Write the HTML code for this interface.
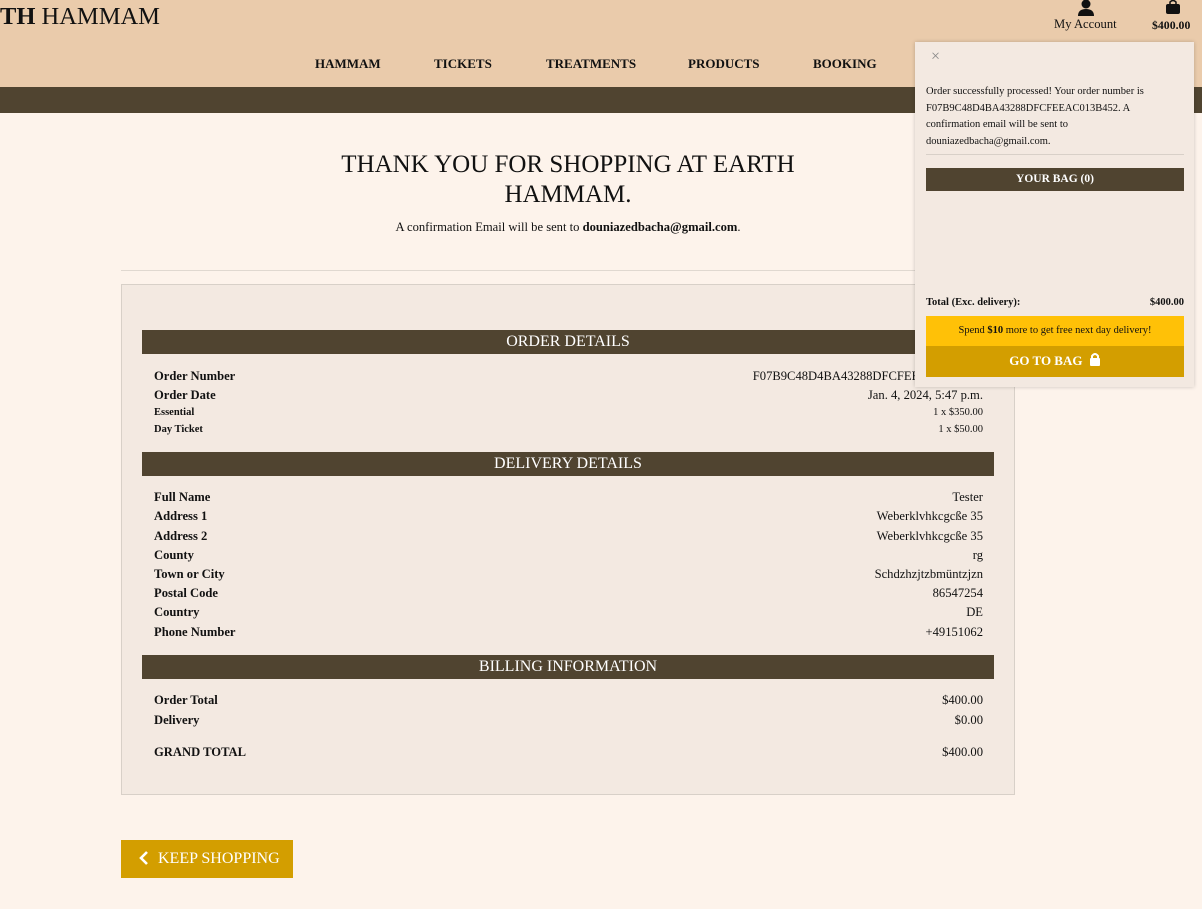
<!DOCTYPE html>
<html><head><meta charset="utf-8"><style>
*{margin:0;padding:0;box-sizing:border-box}
body{width:1202px;height:909px;background:#fdf3eb;font-family:"Liberation Serif",serif;color:#111;position:relative;overflow:hidden}
.a{position:absolute}
.hdr{left:0;top:0;width:1202px;height:87px;background:#eacbab}
.band{left:0;top:87px;width:1202px;height:26px;background:#504430}
.nav{top:56px;font-size:13px;font-weight:bold;letter-spacing:0}
.card{left:121px;top:284px;width:894px;height:511px;background:#f3e9e1;border:1px solid #d8d0c8}
.sh{left:142px;width:852px;height:24px;background:#504430;color:#fff;text-align:center;font-size:16px;line-height:24px}
.r{left:154px;width:829px;font-size:12.6px;display:flex;justify-content:space-between;height:16px;line-height:16px}
.s{font-size:10.5px}
</style></head><body>
<div class="a hdr"></div>
<div class="a band"></div>
<div class="a" style="left:0;top:2px;font-size:24.5px;line-height:30px"><b>TH</b> HAMMAM</div>
<div class="a nav" style="left:315px">HAMMAM</div>
<div class="a nav" style="left:434px">TICKETS</div>
<div class="a nav" style="left:546px">TREATMENTS</div>
<div class="a nav" style="left:688px">PRODUCTS</div>
<div class="a nav" style="left:813px">BOOKING</div>
<svg class="a" style="left:1077px;top:0" width="18" height="16" viewBox="0 0 18 16"><circle cx="9" cy="4" r="4.5" fill="#111"/><path d="M1 16 Q1 9 9 9 Q17 9 17 16Z" fill="#111"/></svg>
<div class="a" style="left:1054px;top:17px;font-size:12.6px">My Account</div>
<svg class="a" style="left:1165px;top:0" width="16" height="14" viewBox="0 0 16 14"><path d="M5 4 V2 Q8 -1 11 2 V4" stroke="#111" fill="none" stroke-width="1.5"/><rect x="1" y="4" width="14" height="10" rx="2" fill="#111"/></svg>
<div class="a" style="left:1152px;top:18px;font-size:11.8px;font-weight:bold">$400.00</div>

<div class="a" style="left:300px;top:150px;width:536px;text-align:center;font-size:25px;line-height:30px">THANK YOU FOR SHOPPING AT EARTH HAMMAM.</div>
<div class="a" style="left:300px;top:220px;width:536px;text-align:center;font-size:12.6px">A confirmation Email will be sent to <b>douniazedbacha@gmail.com</b>.</div>
<div class="a" style="left:121px;top:270px;width:894px;height:1px;background:#e0d8d0"></div>

<div class="a card"></div>
<div class="a sh" style="top:330px">ORDER DETAILS</div>
<div class="a r" style="top:368px"><b>Order Number</b><span>F07B9C48D4BA43288DFCFEEAC013B452</span></div>
<div class="a r" style="top:387px"><b>Order Date</b><span>Jan. 4, 2024, 5:47 p.m.</span></div>
<div class="a r s" style="top:405px"><b>Essential</b><span>1 x $350.00</span></div>
<div class="a r s" style="top:422px"><b>Day Ticket</b><span>1 x $50.00</span></div>
<div class="a sh" style="top:452px">DELIVERY DETAILS</div>
<div class="a r" style="top:489px"><b>Full Name</b><span>Tester</span></div>
<div class="a r" style="top:508px"><b>Address 1</b><span>Weberklvhkcgcße 35</span></div>
<div class="a r" style="top:528px"><b>Address 2</b><span>Weberklvhkcgcße 35</span></div>
<div class="a r" style="top:547px"><b>County</b><span>rg</span></div>
<div class="a r" style="top:566px"><b>Town or City</b><span>Schdzhzjtzbmüntzjzn</span></div>
<div class="a r" style="top:585px"><b>Postal Code</b><span>86547254</span></div>
<div class="a r" style="top:604px"><b>Country</b><span>DE</span></div>
<div class="a r" style="top:624px"><b>Phone Number</b><span>+49151062</span></div>
<div class="a sh" style="top:655px">BILLING INFORMATION</div>
<div class="a r" style="top:692px"><b>Order Total</b><span>$400.00</span></div>
<div class="a r" style="top:712px"><b>Delivery</b><span>$0.00</span></div>
<div class="a r" style="top:744px"><b>GRAND TOTAL</b><span>$400.00</span></div>

<div class="a" style="left:121px;top:840px;width:172px;height:38px;background:#d39e00;color:#fff;font-size:16px;line-height:38px;padding-left:37px">KEEP SHOPPING</div>
<svg class="a" style="left:139px;top:851px" width="10" height="14" viewBox="0 0 10 14"><path d="M8 1 L2 7 L8 13" stroke="#fff" stroke-width="2.6" fill="none"/></svg>

<div class="a" style="left:915px;top:42px;width:279px;height:345px;background:#f3e9e1;box-shadow:0 0 4px rgba(0,0,0,.2)"></div>
<div class="a" style="left:931px;top:48px;font-size:16px;color:#888">×</div>
<div class="a" style="left:926px;top:84px;width:245px;font-size:10.5px;line-height:16.5px">Order successfully processed! Your order number is F07B9C48D4BA43288DFCFEEAC013B452. A confirmation email will be sent to douniazedbacha@gmail.com.</div>
<div class="a" style="left:926px;top:154px;width:258px;height:1px;background:#d8d0c8"></div>
<div class="a" style="left:926px;top:168px;width:258px;height:23px;background:#504430;color:#fff;text-align:center;font-size:11.5px;line-height:23px;font-weight:bold">YOUR BAG (0)</div>
<div class="a" style="left:926px;top:297px;width:258px;font-size:10.5px;font-weight:bold;display:flex;justify-content:space-between"><span>Total (Exc. delivery):</span><span>$400.00</span></div>
<div class="a" style="left:926px;top:316px;width:258px;height:30px;background:#ffc107;text-align:center;font-size:10.5px;line-height:30px">Spend <b>$10</b> more to get free next day delivery!</div>
<div class="a" style="left:926px;top:346px;width:258px;height:31px;background:#d39e00;color:#fff;text-align:center;font-size:13px;font-weight:bold;line-height:30px">GO TO BAG <svg width="12" height="14" viewBox="0 0 12 14" style="vertical-align:-1px;margin-left:3px"><path d="M3 6 V4 Q6 0 9 4 V6" stroke="#fff" stroke-width="2" fill="none"/><rect x="1" y="6" width="10" height="8" rx="1" fill="#fff"/></svg></div>
</body></html>
